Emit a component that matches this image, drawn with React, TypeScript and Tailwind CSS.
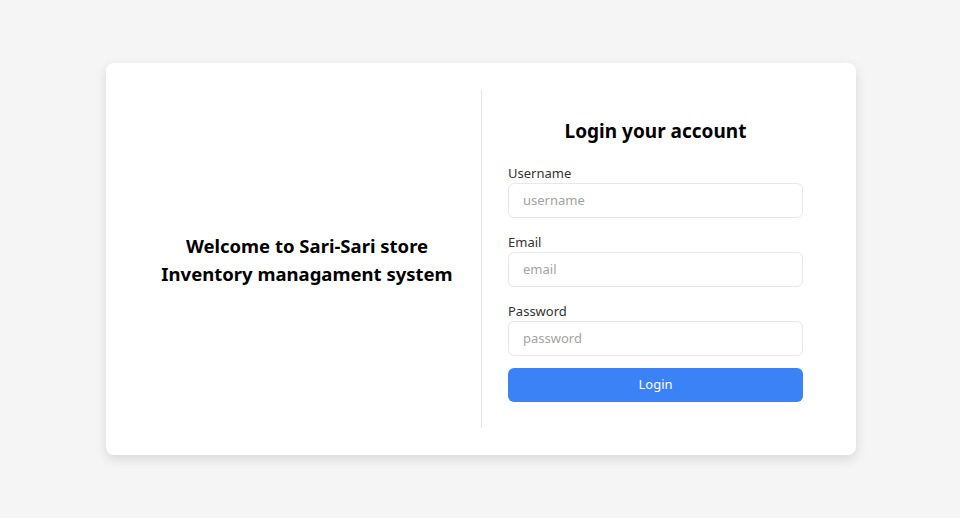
export default function App() {
  return (
    <div className="flex min-h-screen items-center justify-center bg-[#f5f5f5] font-['Noto_Sans',sans-serif]">
      <div className="ml-[2px] grid w-[750px] grid-cols-2 rounded-lg bg-white p-[27px] shadow-[0_4px_12px_rgba(0,0,0,0.12)]">
        <div className="flex items-center justify-center pt-[2px]">
          <h1 className="text-center text-[18.5px] leading-7 font-bold text-black">
            Welcome to Sari-Sari store
            <br />
            Inventory managament system
          </h1>
        </div>
        <form className="flex h-[338px] flex-col justify-center border-l border-[#e5e5e5] pr-[26px] pl-[26px]" onSubmit={(e) => e.preventDefault()}>
          <h2 className="text-center text-[19px] leading-7 font-bold text-black">Login your account</h2>
          <label htmlFor="username" className="mt-[18px] block text-[13px] leading-5 text-[#333]">Username</label>
          <input id="username" placeholder="username" className="h-[35px] w-full rounded-md border border-[#e8e8e8] px-3.5 text-[13px] text-[#333] outline-none placeholder:text-[#a3a3a3]" />
          <label htmlFor="email" className="mt-[14px] block text-[13px] leading-5 text-[#333]">Email</label>
          <input id="email" placeholder="email" className="h-[35px] w-full rounded-md border border-[#e8e8e8] px-3.5 text-[13px] text-[#333] outline-none placeholder:text-[#a3a3a3]" />
          <label htmlFor="password" className="mt-[14px] block text-[13px] leading-5 text-[#333]">Password</label>
          <input id="password" type="password" placeholder="password" className="h-[35px] w-full rounded-md border border-[#e8e8e8] px-3.5 text-[13px] text-[#333] outline-none placeholder:text-[#a3a3a3]" />
          <button className="mt-[12px] h-[34px] w-full rounded-md bg-[#3b82f6] text-[13px] text-white">Login</button>
        </form>
      </div>
    </div>
  );
}
